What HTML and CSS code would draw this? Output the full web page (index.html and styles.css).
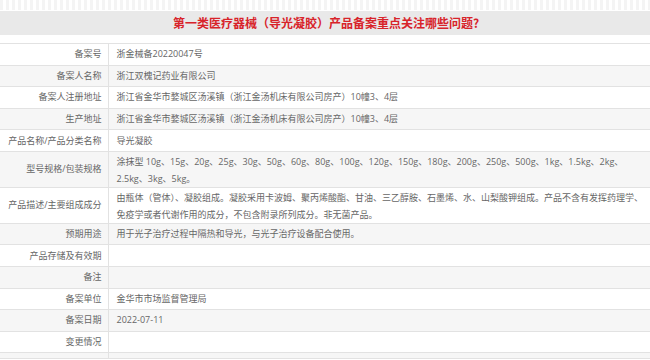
FILE: index.html
```html
<!DOCTYPE html>
<html lang="zh-CN">
<head>
<meta charset="utf-8">
<title>第一类医疗器械（导光凝胶）产品备案重点关注哪些问题?</title>
<link rel="stylesheet" href="styles.css">
</head>
<body>
<div class="strip"></div>
<h1 class="title">第一类医疗器械（导光凝胶）产品备案重点关注哪些问题?</h1>
<table class="info">
  <tbody>
    <tr><th>备案号</th><td>浙金械备20220047号</td></tr>
    <tr><th>备案人名称</th><td>浙江双槐记药业有限公司</td></tr>
    <tr><th>备案人注册地址</th><td>浙江省金华市婺城区汤溪镇（浙江金汤机床有限公司房产）10幢3、4层</td></tr>
    <tr><th>生产地址</th><td>浙江省金华市婺城区汤溪镇（浙江金汤机床有限公司房产）10幢3、4层</td></tr>
    <tr><th>产品名称/产品分类名称</th><td>导光凝胶</td></tr>
    <tr class="two"><th>型号规格/包装规格</th><td>涂抹型 10g、15g、20g、25g、30g、50g、60g、80g、100g、120g、150g、180g、200g、250g、500g、1kg、1.5kg、2kg、<br>2.5kg、3kg、5kg。</td></tr>
    <tr class="two"><th>产品描述/主要组成成分</th><td>由瓶体（管体）、凝胶组成。凝胶采用卡波姆、聚丙烯酸酯、甘油、三乙醇胺、石墨烯、水、山梨酸钾组成。产品不含有发挥药理学、<br>免疫学或者代谢作用的成分，不包含附录所列成分。非无菌产品。</td></tr>
    <tr><th>预期用途</th><td>用于光子治疗过程中隔热和导光，与光子治疗设备配合使用。</td></tr>
    <tr><th>产品存储及有效期</th><td></td></tr>
    <tr><th>备注</th><td></td></tr>
    <tr><th>备案单位</th><td>金华市市场监督管理局</td></tr>
    <tr><th>备案日期</th><td>2022-07-11</td></tr>
    <tr><th>变更情况</th><td></td></tr>
    <tr><th></th><td></td></tr>
  </tbody>
</table>
</body>
</html>
```

FILE: styles.css
```css
html, body {
  margin: 0;
  padding: 0;
  background: #ffffff;
  overflow: hidden;
}
body {
  font-family: "Open Sans", "Noto Sans CJK SC", sans-serif;
  font-size: 9px;
  color: #666666;
}
.strip {
  height: 10px;
  background-image: repeating-linear-gradient(90deg, #f4f4f4 0 3px, #ffffff 3px 6px);
}
.title {
  margin: 1px 0 8px;
  height: 24px;
  line-height: 24px;
  background: #e9e9e9;
  color: #d8232a;
  font-family: "Noto Sans CJK SC", sans-serif;
  font-size: 12px;
  font-weight: bold;
  text-align: center;
  padding-left: 2px;
}
.info {
  width: 100%;
  border-collapse: collapse;
  border-top: 1px solid #e2e2e2;
}
.info th,
.info td {
  border-bottom: 1px solid #e2e2e2;
  padding: 2.2px 7px;
  line-height: 16.2px;
  font-weight: normal;
  vertical-align: middle;
  white-space: nowrap;
}
.info th {
  width: 96px;
  text-align: right;
  color: #666666;
  border-right: 1px solid #e2e2e2;
}
.info td {
  text-align: left;
  color: #666666;
}
.info tr.two td {
  line-height: 17px;
  padding-top: 1px;
  padding-bottom: 0;
}
.info tr:nth-child(even) {
  background: #f6f6f6;
}
```
